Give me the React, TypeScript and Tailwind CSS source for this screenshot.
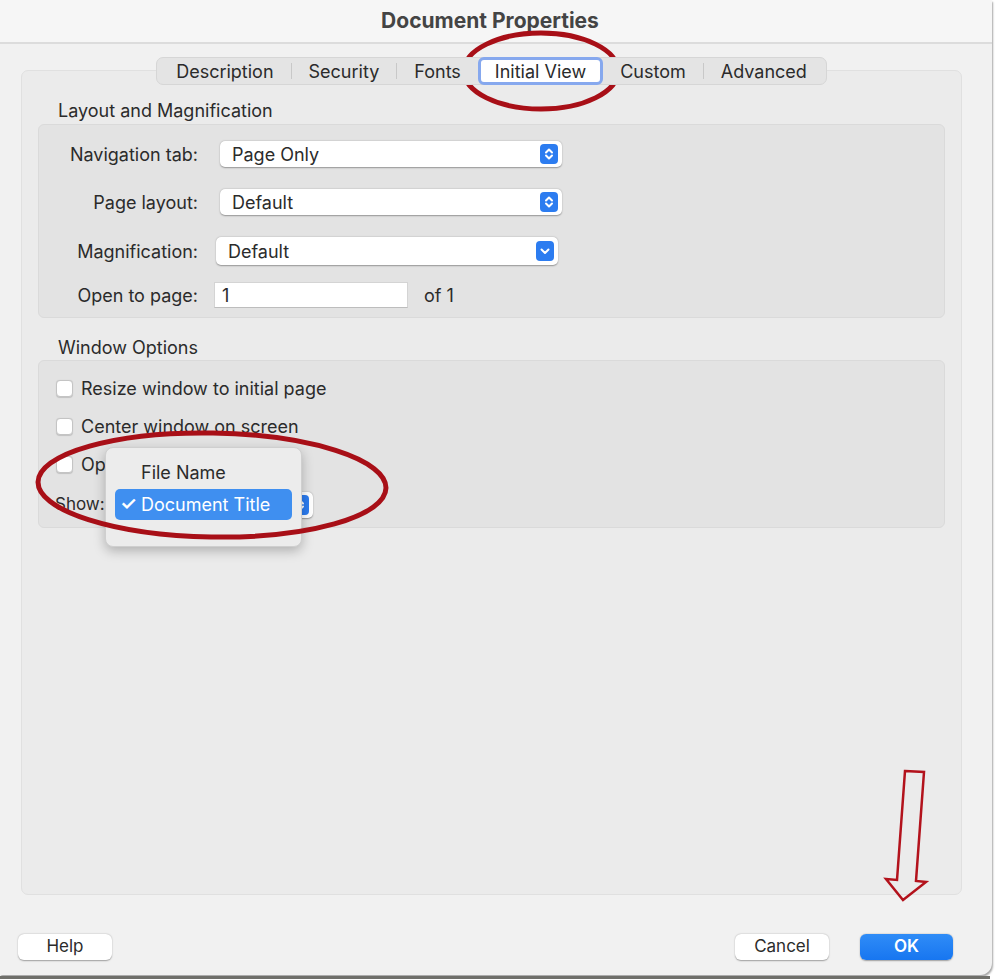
import React from 'react'

const font = { fontFamily: 'Inter, "Open Sans", "Liberation Sans", sans-serif' }

// blue up/down stepper on popup selects
const Stepper = () => (
    <div className="w-[18px] h-[20px] rounded-[4px] bg-[#2c7cf0] flex items-center justify-center">
        <svg viewBox="0 0 18 20" className="w-[18px] h-[20px]" fill="none" stroke="white" strokeWidth="2" strokeLinecap="round" strokeLinejoin="round">
            <path d="M6 8.5 L9 5.5 L12 8.5" />
            <path d="M6 11.5 L9 14.5 L12 11.5" />
        </svg>
    </div>
)

const ChevronBox = () => (
    <div className="w-[18px] h-[20px] rounded-[4px] bg-[#2c7cf0] flex items-center justify-center">
        <svg viewBox="0 0 18 20" className="w-[18px] h-[20px]" fill="none" stroke="white" strokeWidth="2" strokeLinecap="round" strokeLinejoin="round">
            <path d="M5.5 8.5 L9 12 L12.5 8.5" />
        </svg>
    </div>
)

const Select = ({ value, combo, className }: { value: string, combo?: boolean, className?: string }) => (
    <div className={`h-[26px] bg-white rounded-[5px] shadow-[0_0.5px_1.5px_rgba(0,0,0,0.35)] flex items-center justify-between pl-[12px] pr-[4px] ${className ?? ''}`}>
        <span className="text-[18px] text-[#2b2b2b]">{value}</span>
        {combo ? <ChevronBox /> : <Stepper />}
    </div>
)

const Checkbox = ({ label }: { label: string }) => (
    <div className="flex items-center h-[20px]">
        <div className="w-[17px] h-[17px] bg-white rounded-[4px] border border-[#c4c4c4] shadow-[0_0.5px_1px_rgba(0,0,0,0.15)]" />
        <span className="ml-[8px] text-[18px] text-[#2b2b2b] whitespace-nowrap">{label}</span>
    </div>
)

const tabs = ['Description', 'Security', 'Fonts', 'Initial View', 'Custom', 'Advanced']

export default function App() {
    return (
        <div className="w-[1000px] h-[979px] bg-white relative overflow-hidden" style={font}>
            {/* window */}
            <div className="w-[992px] h-[975px] bg-[#f1f1f1] rounded-br-[12px] shadow-[1px_2px_2px_rgba(0,0,0,0.35)] flex flex-col">
                {/* title bar */}
                <div className="h-[44px] shrink-0 bg-[#f6f6f6] border-b-2 border-[#dcdcdc] flex items-center justify-center">
                    <span className="text-[21px] font-bold text-[#444] -ml-[12px]">Document Properties</span>
                </div>

                <div className="flex flex-col pt-[13px] px-[21px] pr-[30px]">
                    {/* tab bar */}
                    <div className="flex justify-center relative z-10">
                        <div className="h-[28px] bg-[#e4e4e4] border border-[#d6d6d6] rounded-[7px] flex items-center px-[2px]">
                            {tabs.map((t, i) => {
                                const sel = t === 'Initial View'
                                const nextSel = tabs[i + 1] === 'Initial View'
                                const last = i === tabs.length - 1
                                return (
                                    <React.Fragment key={t}>
                                        {sel ? (
                                            <div className="h-[28px] -my-[1px] px-[14px] bg-white rounded-[6px] border-[3px] border-[#86a8ee] flex items-center">
                                                <span className="text-[18px] text-[#2b2b2b]">{t}</span>
                                            </div>
                                        ) : (
                                            <div className="h-[26px] px-[17px] flex items-center">
                                                <span className="text-[18px] text-[#2b2b2b]">{t}</span>
                                            </div>
                                        )}
                                        {!sel && !nextSel && !last && <div className="w-px h-[16px] bg-[#c8c8c8]" />}
                                    </React.Fragment>
                                )
                            })}
                        </div>
                    </div>

                    {/* tab content box */}
                    <div className="-mt-[15px] h-[825px] bg-[#ebebeb] border border-[#e0e0e0] rounded-[7px] px-[16px] pt-[30px]">
                        <div className="pl-[20px] text-[18px] text-[#2b2b2b] leading-[20px]">Layout and Magnification</div>
                        <div className="mt-[3px] h-[194px] bg-[#e3e3e3] border border-[#dadada] rounded-[6px] pt-[16px]">
                            <div className="flex items-center h-[26px]">
                                <span className="w-[159px] text-right text-[18px] text-[#2b2b2b]">Navigation tab:</span>
                                <Select value="Page Only" className="ml-[22px] w-[342px]" />
                            </div>
                            <div className="flex items-center h-[26px] mt-[22px]">
                                <span className="w-[159px] text-right text-[18px] text-[#2b2b2b]">Page layout:</span>
                                <Select value="Default" className="ml-[22px] w-[342px]" />
                            </div>
                            <div className="flex items-center h-[28px] mt-[22px]">
                                <span className="w-[159px] text-right text-[18px] text-[#2b2b2b]">Magnification:</span>
                                <Select value="Default" combo className="ml-[18px] w-[342px] h-[28px]" />
                            </div>
                            <div className="flex items-center h-[26px] mt-[17px]">
                                <span className="w-[159px] text-right text-[18px] text-[#2b2b2b]">Open to page:</span>
                                <div className="ml-[16px] w-[194px] h-[26px] bg-white border border-[#d4d4d4] border-b-[#bdbdbd] flex items-center pl-[7px]">
                                    <span className="text-[18px] text-[#2b2b2b]">1</span>
                                </div>
                                <span className="ml-[16px] text-[18px] text-[#2b2b2b]">of 1</span>
                            </div>
                        </div>

                        <div className="mt-[20px] pl-[20px] text-[18px] text-[#2b2b2b] leading-[20px]">Window Options</div>
                        <div className="mt-[2px] h-[168px] bg-[#e3e3e3] border border-[#dadada] rounded-[6px] pt-[17px] pl-[17px] flex flex-col">
                            <Checkbox label="Resize window to initial page" />
                            <div className="mt-[18px]"><Checkbox label="Center window on screen" /></div>
                            <div className="mt-[18px]"><Checkbox label="Open in Full Screen mode" /></div>
                            <div className="mt-[18px] flex items-center h-[26px]">
                                <span className="text-[17px] text-[#2b2b2b] -ml-[1px]">Show:</span>
                                <Select value="Document Title" className="ml-[8px] w-[200px]" />
                            </div>
                        </div>
                    </div>

                    {/* buttons */}
                    <div className="mt-[39px] flex items-center -ml-[3px] pr-[9px]">
                        <button className="w-[94px] h-[26px] bg-white rounded-[6px] shadow-[0_0.5px_1.5px_rgba(0,0,0,0.35)] text-[17px] text-[#2b2b2b]">Help</button>
                        <div className="flex-1" />
                        <button className="w-[94px] h-[26px] bg-white rounded-[6px] shadow-[0_0.5px_1.5px_rgba(0,0,0,0.35)] text-[17px] text-[#2b2b2b]">Cancel</button>
                        <button className="ml-[31px] w-[93px] h-[26px] bg-gradient-to-b from-[#2f8cf7] to-[#1776f0] rounded-[6px] shadow-[0_0.5px_1.5px_rgba(0,0,0,0.35)] text-[17px] font-semibold text-white">OK</button>
                    </div>
                </div>
            </div>

            {/* popup menu over the Show select */}
            <div className="absolute left-[105px] top-[447px] w-[197px] h-[100px] bg-[#ececec] border border-[#cfcfcf] rounded-[8px] shadow-[0_4px_12px_rgba(0,0,0,0.25)] flex flex-col px-[9px] pt-[11px]">
                <div className="h-[26px] flex items-center pl-[26px] text-[18px] text-[#2b2b2b]">File Name</div>
                <div className="mt-[4px] h-[31px] bg-[#3f8ff0] rounded-[5px] flex items-center pl-[5px] text-[18px] text-white">
                    <span className="w-[21px] text-[19px] font-semibold">✓</span>
                    <span>Document Title</span>
                </div>
            </div>

            {/* annotation marks */}
            <svg className="absolute left-0 top-0 w-[1000px] h-[979px] pointer-events-none" viewBox="0 0 1000 979" fill="none">
                <ellipse cx="541" cy="71" rx="77" ry="38" stroke="#a80f17" strokeWidth="5" />
                <ellipse cx="212" cy="485" rx="174" ry="52" stroke="#a80f17" strokeWidth="5" transform="rotate(1 212 485)" />
                <path d="M905 771 L924 772 L916 881 L926 882 L903 900 L886 879 L897 880 Z" stroke="#b3121c" strokeWidth="2.5" strokeLinejoin="miter" />
            </svg>

            {/* bottom shadow strip */}
            <div className="absolute left-0 bottom-0 w-[990px] h-[3px] bg-[#6f6f6a]" />
        </div>
    )
}
